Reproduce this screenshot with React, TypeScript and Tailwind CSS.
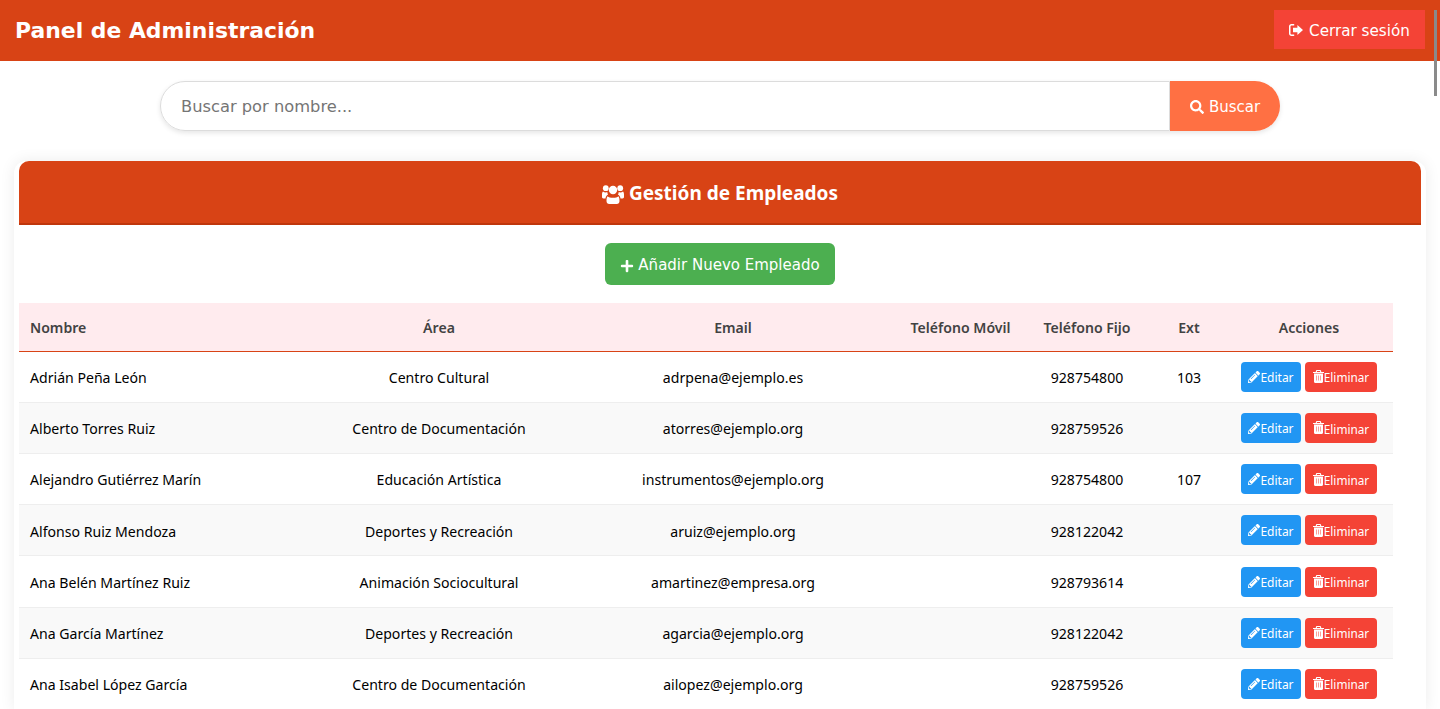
// Employee admin panel: header, search bar and the employee table.
import { FaPencilAlt, FaPlus, FaSearch } from "react-icons/fa";

type Employee = {
  name: string;
  area: string;
  email: string;
  phone: string;
  ext?: string;
};

const employees: Employee[] = [
  { name: "Adrián Peña León", area: "Centro Cultural", email: "adrpena@ejemplo.es", phone: "928754800", ext: "103" },
  { name: "Alberto Torres Ruiz", area: "Centro de Documentación", email: "atorres@ejemplo.org", phone: "928759526" },
  { name: "Alejandro Gutiérrez Marín", area: "Educación Artística", email: "instrumentos@ejemplo.org", phone: "928754800", ext: "107" },
  { name: "Alfonso Ruiz Mendoza", area: "Deportes y Recreación", email: "aruiz@ejemplo.org", phone: "928122042" },
  { name: "Ana Belén Martínez Ruiz", area: "Animación Sociocultural", email: "amartinez@empresa.org", phone: "928793614" },
  { name: "Ana García Martínez", area: "Deportes y Recreación", email: "agarcia@ejemplo.org", phone: "928122042" },
  { name: "Ana Isabel López García", area: "Centro de Documentación", email: "ailopez@ejemplo.org", phone: "928759526" },
];

const wide = "font-['DejaVu_Sans',sans-serif]";
const body = "font-['Noto_Sans','Open_Sans',sans-serif]";

// Font Awesome 4 shapes that the react-icons sets no longer carry.
function UsersIcon() {
  return (
    <svg viewBox="0 0 22 20" className="h-[20px] w-[22px] fill-current">
      <circle cx="11" cy="6" r="4.2" />
      <circle cx="3.8" cy="4.2" r="2.9" />
      <circle cx="18.2" cy="4.2" r="2.9" />
      <path d="M5.6 12.2c1 .9 3 1.6 5.4 1.6s4.400-.7 5.400-1.600c.9.900 1.100 3 1.100 4.800 0 1.800-1.100 3-2.700 3H7.200c-1.600 0-2.700-1.200-2.700-3 0-1.800.2-3.900 1.100-4.800z" />
      <path d="M0 10.500c0-1.300.3-2.700 1-3.100.8.600 1.700 1 2.800 1 .5 0 1-.1 1.500-.3-.1.700.2 1.700.8 2.500-1.300.6-2.300 2-2.600 3.900H1.400C.5 14.500 0 13.700 0 12.800z" />
      <path d="M22 10.500c0-1.300-.3-2.700-1-3.100-.8.600-1.700 1-2.800 1-.5 0-1-.1-1.500-.3.100.700-.2 1.700-.8 2.500 1.300.6 2.300 2 2.600 3.900h2.100c.9 0 1.400-.8 1.400-1.700z" />
    </svg>
  );
}

function TrashIcon() {
  return (
    <svg viewBox="0 0 11 13" className="h-[13px] w-[11px] fill-current">
      <path
        fillRule="evenodd"
        d="M3.400 0h4.200l.8 1.900H11v1.100H0V1.900h2.600zM4.100 1l-.3.900h3.400L6.900 1zM1 3.600h9v8.200c0 .7-.5 1.200-1.100 1.200H2.100C1.500 13 1 12.500 1 11.800zM3.200 5.500v5h.5v-5zm2.050 0v5h.5v-5zm2.050 0v5h.5v-5z"
      />
    </svg>
  );
}

function SignOutIcon() {
  return (
    <svg viewBox="0 0 14 12" className="h-[12px] w-[14px] fill-current">
      <path d="M5.200 0v1.500H2.600c-.6 0-1.100.5-1.100 1.100v6.800c0 .6.5 1.100 1.100 1.100h2.600V12H2.400C1.100 12 0 10.900 0 9.600V2.400C0 1.100 1.100 0 2.400 0z" />
      <path d="M8.400 1 14 6l-5.600 5V8.200H4V3.800h4.400z" />
    </svg>
  );
}

function Row({ employee, striped }: { employee: Employee; striped: boolean }) {
  return (
    <tr className={`h-[51.2px] border-b border-[#eeeeee] text-[14.1px] text-black ${striped ? "bg-[#f9f9f9]" : "bg-white"}`}>
      <td className="px-[11px] pt-[1.6px] text-left">{employee.name}</td>
      <td className="pt-[1.6px] text-center">{employee.area}</td>
      <td className="pt-[1.6px] text-center">{employee.email}</td>
      <td />
      <td className="pt-[1.6px] text-center">{employee.phone}</td>
      <td className="pt-[1.6px] text-center">{employee.ext}</td>
      <td>
        <div className="flex justify-center gap-1">
          <button className="flex h-[30px] w-[60px] items-center justify-center rounded bg-[#2196f3] text-[12px] text-white">
            <FaPencilAlt className="size-[12px]" />
            <span className="pt-[2.8px]">Editar</span>
          </button>
          <button className="flex h-[30px] w-[72px] items-center justify-center rounded bg-[#f44336] text-[11.8px] text-white">
            <TrashIcon />
            <span className="pt-[2.8px]">Eliminar</span>
          </button>
        </div>
      </td>
    </tr>
  );
}

export default function App() {
  return (
    <div className={`relative h-screen overflow-hidden bg-white ${body}`}>
      <header className="flex h-[61px] items-start justify-between bg-[#d84315] px-[15px] pt-[10px] text-white">
        <h1 className={`pt-[5px] text-[21.9px] font-bold ${wide}`}>Panel de Administración</h1>
        <button className={`flex h-[39px] w-[151px] items-center justify-center gap-[6px] bg-[#f44336] text-[15.2px] ${wide}`}>
          <SignOutIcon />
          <span className="pt-[4px]">Cerrar sesión</span>
        </button>
      </header>

      <div className="mt-5 flex justify-center">
        <div className="flex h-[50px] w-[1120px] rounded-full shadow-[0_2px_5px_rgba(0,0,0,0.1)]">
          <input
            placeholder="Buscar por nombre..."
            className={`min-w-0 flex-1 rounded-l-full border border-[#dcdcdc] bg-white pt-[3px] pr-5 pl-[20px] text-[16.3px] outline-none placeholder:text-[#757575] ${wide}`}
          />
          <button className={`flex w-[110px] items-center justify-center gap-[5px] rounded-r-full bg-[#ff7043] pt-[2px] text-[15px] text-white ${wide}`}>
            <FaSearch className="size-[14px]" />
            Buscar
          </button>
        </div>
      </div>

      <main className="mx-[14px] mt-[30px] rounded-t-[12px] bg-white px-[5px] shadow-[0_0_15px_rgba(0,0,0,0.08)]">
        <div className="flex h-[64px] items-center justify-center gap-[5px] rounded-t-[10px] border-b-2 border-[#bf360c] bg-[#d84315] pt-[3px] text-[19px] font-bold text-white">
          <UsersIcon />
          Gestión de Empleados
        </div>

        <div className="flex justify-center py-[18px]">
          <button className={`flex h-[42px] w-[230px] items-center justify-center gap-[4px] rounded-md bg-[#4caf50] pt-[3px] text-[15px] text-white ${wide}`}>
            <FaPlus className="size-[14px]" />
            Añadir Nuevo Empleado
          </button>
        </div>

        <table className="w-[1374px] table-fixed border-collapse">
          <colgroup>
            <col className="w-[293px]" />
            <col className="w-[254px]" />
            <col className="w-[334px]" />
            <col className="w-[121px]" />
            <col className="w-[132px]" />
            <col className="w-[72px]" />
            <col className="w-[168px]" />
          </colgroup>
          <thead>
            <tr className="h-[48.2px] border-b border-[#d84315] bg-[#ffebee] text-[14.1px] text-[#424242]">
              <th className="px-[11px] pt-[2px] text-left font-semibold">Nombre</th>
              <th className="pt-[2px] font-semibold">Área</th>
              <th className="pt-[2px] font-semibold">Email</th>
              <th className="pt-[2px] font-semibold">Teléfono Móvil</th>
              <th className="pt-[2px] font-semibold">Teléfono Fijo</th>
              <th className="pt-[2px] font-semibold">Ext</th>
              <th className="pt-[2px] font-semibold">Acciones</th>
            </tr>
          </thead>
          <tbody>
            {employees.map((employee, index) => (
              <Row key={employee.name} employee={employee} striped={index % 2 === 1} />
            ))}
          </tbody>
        </table>
      </main>

      {/* page scrollbar thumb */}
      <div className="absolute top-[10px] right-[3px] h-[86px] w-[3px] bg-[#8a8a8a]" />
    </div>
  );
}
